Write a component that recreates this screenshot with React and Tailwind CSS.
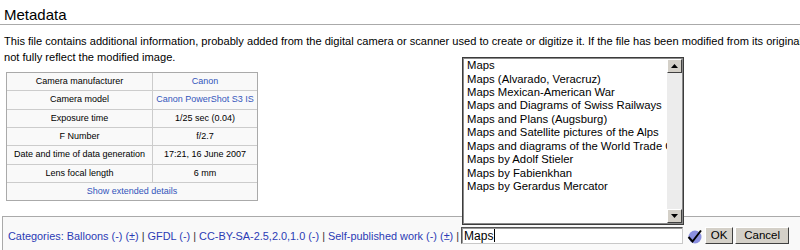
export default function App() {
  const rows = [
    ["Camera manufacturer", "Canon", true],
    ["Camera model", "Canon PowerShot S3 IS", true],
    ["Exposure time", "1/25 sec (0.04)", false],
    ["F Number", "f/2.7", false],
    ["Date and time of data generation", "17:21, 16 June 2007", false],
    ["Lens focal length", "6 mm", false],
  ];
  const items = [
    "Maps",
    "Maps (Alvarado, Veracruz)",
    "Maps Mexican-American War",
    "Maps and Diagrams of Swiss Railways",
    "Maps and Plans (Augsburg)",
    "Maps and Satellite pictures of the Alps",
    "Maps and diagrams of the World Trade Center",
    "Maps by Adolf Stieler",
    "Maps by Fabienkhan",
    "Maps by Gerardus Mercator",
  ];
  const link = "text-[#2b3bb5]";
  const sep = <span className="text-[#333]"> | </span>;
  return (
    <div className="w-[800px] h-[250px] overflow-hidden bg-white font-['Liberation_Sans',Arial,sans-serif] text-black">
      <div className="w-[1100px]">
        <h2 className="pl-[4px] pt-[6px] pb-px leading-[17px] text-[15px] font-normal border-b border-[#aaa]">
          Metadata
        </h2>
        <p className="mt-[9px] pl-[4px] text-[11.1px] leading-[15.6px] whitespace-nowrap">
          This file contains additional information, probably added from the digital camera or scanner used to create or digitize it. If the file has been modified from its original state, some details may
          <br />
          not fully reflect the modified image.
        </p>
        <div className="mt-[7px] ml-[6px] w-[252px] border border-[#aaa] bg-[#f9f9f9] text-[9px]">
          {rows.map(([k, v, isLink]) => (
            <div key={k} className="flex h-[18.3px] border-b border-[#ccc]">
              <div className="w-[146px] flex items-center justify-center border-r border-[#ccc]">{k}</div>
              <div className={"flex-1 flex items-center justify-center " + (isLink ? "text-[#3355bb]" : "")}>{v}</div>
            </div>
          ))}
          <div className="flex h-[17.3px] items-center justify-center text-[#3355bb]">Show extended details</div>
        </div>
        <div className="mt-[15px] ml-[2px] border border-[#aaa] bg-[#f9f9f9] pt-[10px] pb-[10px] pl-[5px] flex items-center text-[10.9px]">
          <span className="whitespace-nowrap">
            <span className={link}>Categories</span><span className={link}>:</span>{" "}
            <span className={link}>Balloons</span> <span className={link}>(-)</span> <span className={link}>(±)</span>
            {sep}
            <span className={link}>GFDL</span> <span className={link}>(-)</span>
            {sep}
            <span className={link}>CC-BY-SA-2.5,2.0,1.0</span> <span className={link}>(-)</span>
            {sep}
            <span className={link}>Self-published work</span> <span className={link}>(-)</span> <span className={link}>(±)</span>
            {sep}
          </span>
          <div className="relative ml-[2px]">
            <div className="absolute left-[1px] bottom-[calc(100%+2px)] w-[222px] h-[168px] bg-white border border-[#3c3c3c] shadow-[inset_0_0_0_1px_#8a8a8a] p-[1px] flex">
              <div className="flex-1 overflow-hidden pl-[3px] text-[11.3px] leading-[13.4px] whitespace-nowrap">
                {items.map((t) => (
                  <div key={t}>{t}</div>
                ))}
              </div>
              <div className="w-[15px] flex flex-col bg-[#ececec]">
                <div className="h-[14px] bg-[#d4d0c8] border border-t-white border-l-white border-r-[#404040] border-b-[#404040] flex items-center justify-center">
                  <svg width="7" height="4" viewBox="0 0 7 4"><path d="M3.5 0 L7 4 L0 4 Z" fill="#000" /></svg>
                </div>
                <div className="flex-1" />
                <div className="h-[14px] bg-[#d4d0c8] border border-t-white border-l-white border-r-[#404040] border-b-[#404040] flex items-center justify-center">
                  <svg width="7" height="4" viewBox="0 0 7 4"><path d="M0 0 L7 0 L3.5 4 Z" fill="#000" /></svg>
                </div>
              </div>
            </div>
            <div className="w-[222px] h-[17px] bg-white border border-t-[#555] border-l-[#555] border-r-[#c8c8c8] border-b-[#c8c8c8] shadow-[inset_1px_1px_0_#999] flex items-center pl-[2px] text-[12px]">
              <span>Maps</span>
              <span className="w-px h-[13px] bg-black ml-px" />
            </div>
          </div>
          <svg className="ml-[3px]" width="17" height="16" viewBox="0 0 17 16">
            <circle cx="9" cy="9" r="6.5" fill="#8a8fe0" />
            <path d="M2.5 9 L6.5 13.5 L15 2.5" fill="none" stroke="#000" strokeWidth="2" />
          </svg>
          <button className="ml-[2px] w-[28px] h-[17px] bg-[#d4d0c8] border border-t-white border-l-white border-r-[#404040] border-b-[#404040] text-[11.5px] leading-none flex items-center justify-center">OK</button>
          <button className="ml-[2px] w-[54px] h-[17px] bg-[#d4d0c8] border border-t-white border-l-white border-r-[#404040] border-b-[#404040] text-[11.5px] leading-none flex items-center justify-center">Cancel</button>
        </div>
      </div>
    </div>
  );
}
